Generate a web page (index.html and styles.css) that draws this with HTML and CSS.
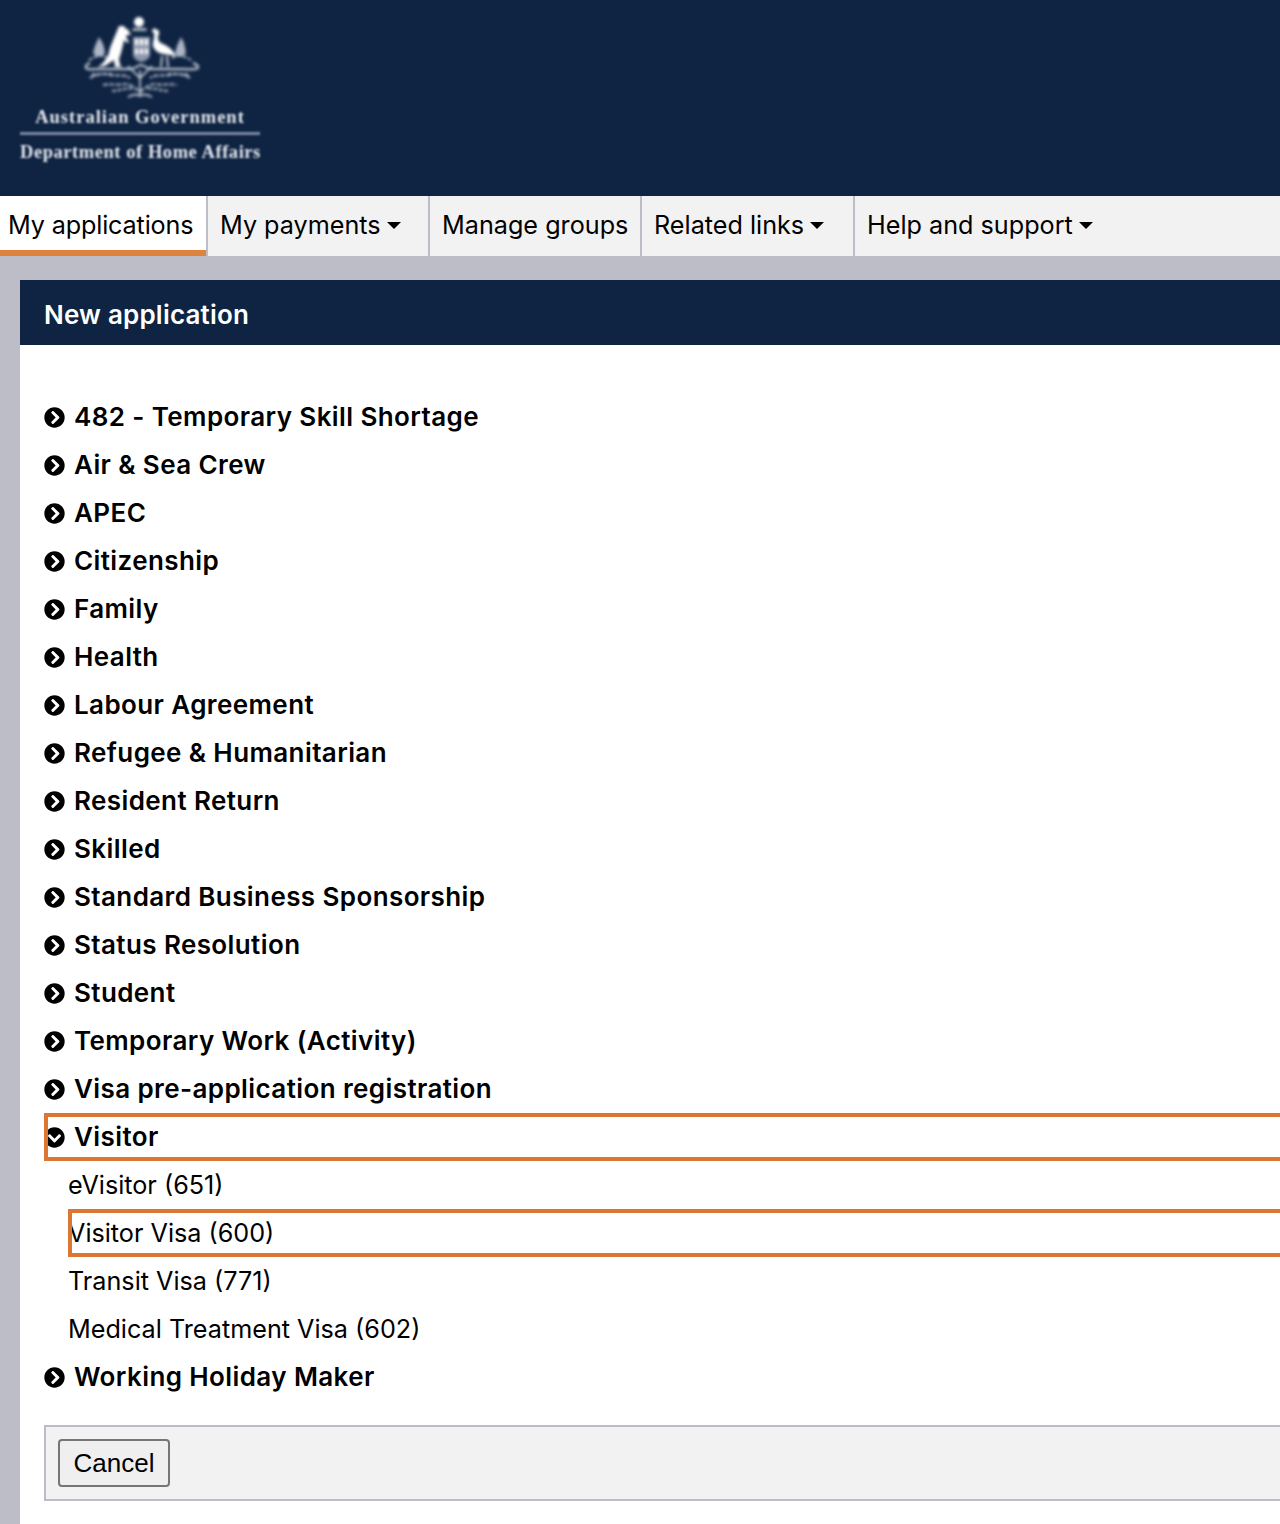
FILE: index.html
```html
<!DOCTYPE html>
<html>
<head>
  <link rel="stylesheet" href="styles.css">
</head>
<body>

<svg class="sprites" width="0" height="0">
  <symbol id="circle-right" viewBox="0 0 512 512"><path d="M256 8c137 0 248 111 248 248S393 504 256 504 8 393 8 256 119 8 256 8zm113.9 231L234.4 103.5c-9.4-9.4-24.6-9.4-33.9 0l-17 17c-9.4 9.4-9.4 24.6 0 33.9L285.1 256 183.5 357.6c-9.4 9.4-9.4 24.6 0 33.9l17 17c9.4 9.4 24.6 9.4 33.9 0L369.9 273c9.4-9.4 9.4-24.6 0-34z"/></symbol>
  <symbol id="circle-down" viewBox="0 0 512 512"><path d="M504 256c0 137-111 248-248 248S8 393 8 256 119 8 256 8s248 111 248 248zM273 369.9l135.5-135.5c9.4-9.4 9.4-24.6 0-33.9l-17-17c-9.4-9.4-24.6-9.4-33.9 0L256 285.1 154.4 183.5c-9.4-9.4-24.6-9.4-33.9 0l-17 17c-9.4 9.4-9.4 24.6 0 33.9L239 369.9c9.4 9.4 24.6 9.4 34 0z"/></symbol>
</svg>

<!-- Banner -->
<div class="banner">
  <div class="logo">
    <svg class="crest" viewBox="80 12 120 90" width="120" height="90">
      <!-- star and crown -->
      <circle cx="139" cy="22" r="5" fill="#fff"/>
      <path d="M133 28h13l1 3h-15z" fill="#aeb6c6"/>
      <!-- kangaroo -->
      <path fill="#fff" d="M124 26l2 3 2 0 1 3 2 2-1 1-3 0-1 2 2 3 1 3-3-1-2-2-1 5-2 8-2 6 1 6 2 2-7 0-1-7-3 2-6 4-7 1 5-4 5-7 2-8 4-10 3-7 2-5z"/>
      <!-- emu -->
      <path fill="#fff" d="M156 29c-2-1-4 0-4 2 0 1 2 1 2 3 1 4-2 8-1 12 1 4 5 7 10 8l13 2c-3-6-8-10-13-12-3-1-5-3-5-6 0-3 2-5 1-7z"/>
      <path fill="none" stroke="#fff" stroke-width="1.500" d="M162 56l-1 11M167 56l1 11"/>
      <!-- shield -->
      <path fill="#8e98ad" d="M133 37h17v18c0 3-4 6-8.500 7-4.500-1-8.500-4-8.500-7z"/>
      <path fill="#fff" d="M135 39h3v6h-3zM140 39h3v6h-3zM145 39h3v6h-3zM135 49h3v5h-3zM140 49h3v5h-3zM145 49h3v5h-3z"/>
      <!-- wattle trees -->
      <g fill="#aeb6c6">
        <path d="M99 37l3 5 2 5 1 6-3 3h-6l-3-3 2-7z"/>
        <path d="M181 37l3 6 1 5 1 5-3 3h-6l-2-3 2-7z"/>
      </g>
      <!-- wreath band -->
      <g fill="none" stroke="#d4d9e3">
        <path stroke-width="2" d="M90 63c-3 1-5 3-4 5 1 2 4 1 14 1h30c6 0 8-4 11-4s5 4 11 4h30c7 0 14 1 16-1 1-2-2-4-5-5"/>
        <path stroke-width="1.600" stroke-dasharray="4 1.500" d="M89 60c6-4 13-6 19-2M172 58c6-4 13-2 19 2"/>
        <path stroke-width="1.700" stroke-dasharray="5 1.500" d="M90 78c6-4 13-5 20-3 7 1 14-1 20 3M190 78c-6-4-13-5-20-3-7 1-14-1-20 3"/>
        <path stroke-width="1.700" stroke-dasharray="4 1.500" d="M92 74c7 2 14-2 22 1M188 74c-7 2-14-2-22 1"/>
        <path stroke-width="1.700" stroke-dasharray="5 1.500" d="M103 85c8-2 15 1 22-1 6 0 10 4 15 8 5-4 9-8 15-8 7 2 14-1 22 1"/>
        <path stroke-width="1.700" stroke-dasharray="4 1.500" d="M112 91c8 0 14-4 22-2M168 91c-8 0-14-4-22-2"/>
        <path stroke-width="1.600" d="M128 97c6-3 8-3 12-1 4-2 6-2 12 1M140 70v26M128 66l12 12 12-12"/>
      </g>
    </svg>
    <div class="logo-gov">Australian Government</div>
    <div class="logo-dept">Department of Home Affairs</div>
  </div>
</div>

<!-- Menu -->
<div class="menu">
  <a class="menu-item first active">My applications</a>
  <a class="menu-item pay caret">My payments</a>
  <a class="menu-item groups">Manage groups</a>
  <a class="menu-item links caret">Related links</a>
  <a class="menu-item help caret">Help and support</a>
</div>

<div class="panel">
  <div class="panel-title">New application</div>

  <div class="tree">
    <div class="row group"><svg class="ico"><use href="#circle-right"/></svg>482 - Temporary Skill Shortage</div>
    <div class="row group"><svg class="ico"><use href="#circle-right"/></svg>Air &amp; Sea Crew</div>
    <div class="row group"><svg class="ico"><use href="#circle-right"/></svg>APEC</div>
    <div class="row group"><svg class="ico"><use href="#circle-right"/></svg>Citizenship</div>
    <div class="row group"><svg class="ico"><use href="#circle-right"/></svg>Family</div>
    <div class="row group"><svg class="ico"><use href="#circle-right"/></svg>Health</div>
    <div class="row group"><svg class="ico"><use href="#circle-right"/></svg>Labour Agreement</div>
    <div class="row group"><svg class="ico"><use href="#circle-right"/></svg>Refugee &amp; Humanitarian</div>
    <div class="row group"><svg class="ico"><use href="#circle-right"/></svg>Resident Return</div>
    <div class="row group"><svg class="ico"><use href="#circle-right"/></svg>Skilled</div>
    <div class="row group"><svg class="ico"><use href="#circle-right"/></svg>Standard Business Sponsorship</div>
    <div class="row group"><svg class="ico"><use href="#circle-right"/></svg>Status Resolution</div>
    <div class="row group"><svg class="ico"><use href="#circle-right"/></svg>Student</div>
    <div class="row group"><svg class="ico"><use href="#circle-right"/></svg>Temporary Work (Activity)</div>
    <div class="row group"><svg class="ico"><use href="#circle-right"/></svg>Visa pre-application registration</div>
    <div class="row group focused"><svg class="ico"><use href="#circle-down"/></svg>Visitor</div>
    <div class="row child">eVisitor (651)</div>
    <div class="row child focused">Visitor Visa (600)</div>
    <div class="row child">Transit Visa (771)</div>
    <div class="row child">Medical Treatment Visa (602)</div>
    <div class="row group"><svg class="ico"><use href="#circle-right"/></svg>Working Holiday Maker</div>
  </div>

  <div class="actions">
    <button class="btn">Cancel</button>
  </div>
</div>

</body>
</html>
```

FILE: styles.css
```css
html, body {
  margin: 0;
  height: 100%;
  overflow: hidden;
}
body {
  background-color: #BCBDC6;
  color: #000;
  font-family: Inter, "Liberation Sans", Arial, sans-serif;
  font-size: 25.2px;
}
.sprites {
  display: block;
  height: 0;
}

.banner {
  background-color: #0F2443;
  height: 196px;
  padding: 12px 0 0 20px;
  box-sizing: border-box;
}
.logo {
  width: 240px;
  color: #e4e7ed;
  font-family: "Liberation Serif", serif;
  font-weight: bold;
  text-align: center;
  filter: blur(0.8px);
}
.crest {
  display: block;
  margin: 0 auto;
  filter: blur(0.8px);
}
.logo-gov {
  font-size: 18.5px;
  letter-spacing: 1px;
  line-height: 22px;
  margin-top: 4px;
  padding-bottom: 4px;
  border-bottom: 3px solid #7c88a3;
}
.logo-dept {
  font-size: 18.5px;
  letter-spacing: 0.55px;
  line-height: 22px;
  margin-top: 6px;
  white-space: nowrap;
}

.menu {
  display: flex;
  height: 60px;
  background-color: #F2F2F2;
}
.menu-item {
  display: flex;
  align-items: center;
  box-sizing: border-box;
  height: 60px;
  padding: 0 12px 2px;
  border-right: 2px solid #BCBDC6;
  white-space: nowrap;
}
.menu-item:last-child {
  border-right: none;
}
.first {
  width: 208px;
  padding-left: 8px;
  letter-spacing: -0.15px;
}
.pay { width: 222px; }
.groups { width: 212px; }
.links { width: 213px; }
.active {
  background-color: #fff;
  box-shadow: inset 0 -6px 0 #DF833C;
}
.caret::after {
  content: "";
  margin-left: 6px;
  margin-top: 1px;
  border-top: 7px solid #000;
  border-left: 7px solid transparent;
  border-right: 7px solid transparent;
}

.panel {
  background-color: #fff;
  margin: 24px -40px 0 20px;
  height: 1244px;
}
.panel-title {
  background-color: #0F2443;
  color: #fff;
  font-size: 26px;
  font-weight: 600;
  letter-spacing: 0.2px;
  height: 65px;
  line-height: 70px;
  padding-left: 24px;
}
.tree {
  padding: 48px 0 0 24px;
}
.row {
  height: 48px;
  line-height: 48px;
  white-space: nowrap;
}
.group {
  display: flex;
  align-items: center;
  font-size: 26px;
  font-weight: 600;
  letter-spacing: 0.4px;
}
.child {
  margin-left: 24px;
}
.focused {
  outline: 4px solid #DC7633;
  outline-offset: -4px;
}
.ico {
  width: 21px;
  height: 21px;
  margin-right: 9px;
  flex: none;
}
.actions {
  margin: 24px 0 0 24px;
  height: 76px;
  box-sizing: border-box;
  border: 2px solid #BCBDC6;
  background-color: #F2F2F2;
  padding: 12px;
}
.btn {
  display: block;
  width: 112px;
  height: 48px;
  padding: 0;
  border: 2px solid #767676;
  border-radius: 4px;
  background-color: #EFEFEF;
  color: #000;
  font-family: "Liberation Sans", Arial, sans-serif;
  font-size: 26px;
}
```
